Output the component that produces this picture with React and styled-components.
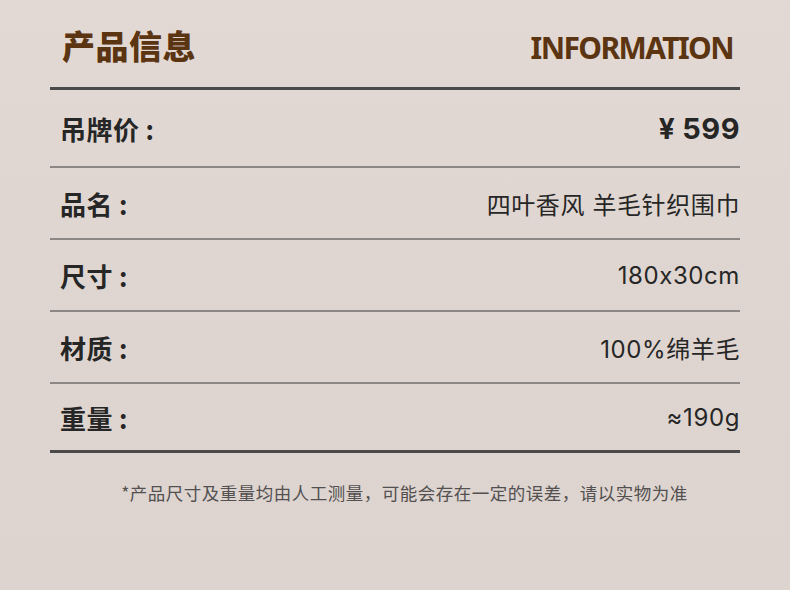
import React from "react";
import styled, { createGlobalStyle } from "styled-components";

const Global = createGlobalStyle`
  html, body { margin: 0; padding: 0; }
  body { width: 790px; height: 590px; overflow: hidden; }
`;

const Page = styled.div`
  width: 790px;
  height: 590px;
  box-sizing: border-box;
  background: linear-gradient(180deg, #e3d9d4 0%, #ded5d0 55%, #ddd4cf 100%);
  font-family: "Noto Sans CJK SC", "Noto Sans", sans-serif;
  color: #2a2a2a;
  display: flex;
  flex-direction: column;
`;

const Header = styled.header`
  height: 87px;
  box-sizing: border-box;
  margin: 0 50px;
  padding: 4px 7px 0 12px;
  display: flex;
  align-items: center;
  justify-content: space-between;
`;

const Title = styled.h1`
  margin: 0;
  font-size: 33px;
  font-weight: 900;
  letter-spacing: 0.5px;
  color: #5b3411;
  line-height: 1;
`;

const EnTitle = styled.div`
  margin-top: 5px;
  font-family: "Noto Sans", "Open Sans", sans-serif;
  font-size: 30px;
  font-weight: 700;
  letter-spacing: -1.6px;
  color: #5b3411;
  line-height: 1;
`;

const Table = styled.div`
  margin: 0 50px;
  border-top: 3px solid #4b4a4a;
  border-bottom: 3px solid #4b4a4a;
  display: flex;
  flex-direction: column;
`;

const Row = styled.div`
  height: ${(p) => p.$h}px;
  box-sizing: border-box;
  padding: 0 0 0 10px;
  display: flex;
  align-items: center;
  justify-content: space-between;
  border-bottom: ${(p) => (p.$last ? "none" : "2px solid #8c8784")};
`;

const Label = styled.span`
  font-size: 26px;
  font-weight: 700;
  color: #262626;
  letter-spacing: 0.5px;
`;

const Colon = styled.span`
  margin-left: 6px;
`;

const Value = styled.span`
  font-family: "Inter", "Noto Sans CJK SC", sans-serif;
  font-size: 24px;
  font-weight: 400;
  color: #262626;
  letter-spacing: 0.6px;
  white-space: pre;
`;

const Price = styled.span`
  font-family: "Inter", "Noto Sans CJK SC", sans-serif;
  font-size: 29px;
  font-weight: 700;
  color: #262626;
  letter-spacing: 0.5px;
  display: flex;
  align-items: baseline;
  gap: 7px;
`;

const Yen = styled.span`
  font-size: 28px;
`;

const Note = styled.p`
  margin: 27px 0 0;
  padding-left: 19px;
  text-align: center;
  font-size: 17.5px;
  color: #525050;
  letter-spacing: 0.5px;
`;

const rows = [
  { label: "吊牌价", h: 78 },
  { label: "品名", value: "四叶香风 羊毛针织围巾", h: 72 },
  { label: "尺寸", value: "180x30cm", h: 72 },
  { label: "材质", value: "100%绵羊毛", h: 72 },
  { label: "重量", value: "≈190g", h: 66 },
];

export default function App() {
  return (
    <>
      <Global />
      <Page>
        <Header>
          <Title>产品信息</Title>
          <EnTitle>INFORMATION</EnTitle>
        </Header>
        <Table>
          {rows.map((r, i) => (
            <Row key={r.label} $h={r.h} $last={i === rows.length - 1}>
              <Label>
                {r.label}
                <Colon>:</Colon>
              </Label>
              {r.value ? (
                <Value>{r.value}</Value>
              ) : (
                <Price>
                  <Yen>¥</Yen>
                  <span>599</span>
                </Price>
              )}
            </Row>
          ))}
        </Table>
        <Note>*产品尺寸及重量均由人工测量，可能会存在一定的误差，请以实物为准</Note>
      </Page>
    </>
  );
}
